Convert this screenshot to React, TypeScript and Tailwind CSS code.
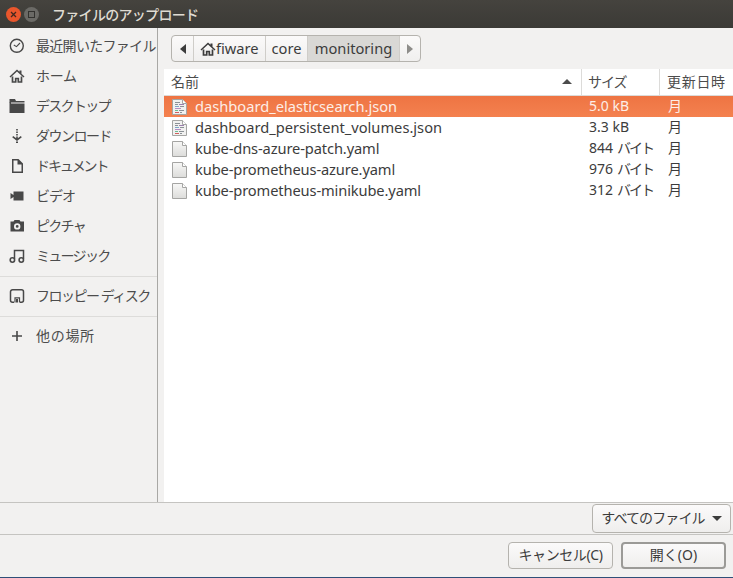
const sans = 'font-["Noto_Sans","Noto_Sans_CJK_JP",sans-serif]'

function FileIcon({ json }: { json?: boolean }) {
  return (
    <svg width="16" height="16" viewBox="0 0 16 16" className="shrink-0">
      <defs>
        <linearGradient id="paper" x1="0" y1="0" x2="0" y2="1">
          <stop offset="0" stopColor="#f8f8f7" />
          <stop offset="1" stopColor="#dcdcda" />
        </linearGradient>
      </defs>
      <path d="M.5.5h10l4 4v11H.5z" fill={json ? '#f1f1f0' : 'url(#paper)'} stroke="#a5a5a3" />
      <path d="M10.500.5v4h4" fill="#fff" stroke="#a5a5a3" />
      {json && (
        <g strokeWidth="1">
          <path d="M3 3.500h5" stroke="#8b9196" />
          <path d="M3 5.500h3" stroke="#8b9196" />
          <path d="M7 5.500h5" stroke="#9b7fae" />
          <path d="M3 7.500h4" stroke="#7ba7c9" />
          <path d="M8 7.500h4" stroke="#8b9196" />
          <path d="M3 9.500h6" stroke="#b58ac0" />
          <path d="M3 11.500h3" stroke="#6dbb94" />
          <path d="M7 11.500h5" stroke="#8b9196" />
          <path d="M3 13.500h4" stroke="#d0605c" />
          <path d="M8 13.500h2" stroke="#8b9196" />
        </g>
      )}
    </svg>
  )
}

function HomeGlyph({ color }: { color: string }) {
  return (
    <g>
      <path d="M8 1.500.5 8.500l1 1L8 3.500l6.500 6 1-1-3-2.800V2.500h-2v1.300z" fill={color} />
      <path d="M3.500 8.500v5.500h3.200v-3.500h2.600V14h3.200V8.500" fill="none" stroke={color} strokeWidth="1.700" />
    </g>
  )
}

function SideIcon({ name }: { name: string }) {
  const c = '#484848'
  return (
    <svg width="16" height="16" viewBox="0 0 16 16" className="shrink-0">
      {name === 'recent' && (
        <g fill="none" stroke={c}>
          <circle cx="7.800" cy="7.800" r="6.500" strokeWidth="1.400" />
          <path d="M4.800 7l2.700 1.600L11 5" strokeWidth="1.100" />
        </g>
      )}
      {name === 'home' && <HomeGlyph color={c} />}
      {name === 'desktop' && (
        <g fill={c}>
          <path d="M.5 1h5.500l1 2H15.500v1.500H.5z" />
          <path d="M.5 4H2v1.500h13.500V15H.5z" />
        </g>
      )}
      {name === 'download' && (
        <g fill={c}>
          <rect x="7.200" y="1" width="1.600" height="1.500" />
          <rect x="7.200" y="3.500" width="1.600" height="1.500" />
          <rect x="7.200" y="6" width="1.600" height="1.500" />
          <path d="M7.200 8.500h1.600v1.800l3-2.300 1 1.200L8 13 3.200 9.200l1-1.200 3 2.300z" />
          <rect x="7" y="13.500" width="2" height="1.500" />
        </g>
      )}
      {name === 'doc' && (
        <path d="M3 1h6.500L14 5.500V15H3zM4.500 2.500v11h8V6.500H8.500v-4z" fill={c} fillRule="evenodd" />
      )}
      {name === 'video' && <path d="M1.500 5 4.500 7V3.500h10V12.500h-10V9l-3 2z" fill={c} />}
      {name === 'photo' && (
        <path d="M5.500 2h5l1 1.500h3.500v10H1.500V3.500H4.500zM8.200 5.200a3.200 3.200 0 1 0 0 6.400 3.200 3.200 0 0 0 0-6.400zm0 1.800a1.400 1.400 0 1 1 0 2.800 1.400 1.400 0 0 1 0-2.800z" fill={c} fillRule="evenodd" />
      )}
      {name === 'music' && (
        <g>
          <path d="M5.500 11V2.500h9V11" fill="none" stroke={c} strokeWidth="1.500" />
          <circle cx="3.400" cy="12" r="2.200" fill="none" stroke={c} strokeWidth="1.600" />
          <circle cx="12.300" cy="12" r="2.200" fill="none" stroke={c} strokeWidth="1.600" />
        </g>
      )}
      {name === 'floppy' && (
        <g fill="none" stroke={c}>
          <path d="M5 14.200H3.500a2 2 0 0 1-2-2V3.800a2 2 0 0 1 2-2h9a2 2 0 0 1 2 2v8.400a2 2 0 0 1-2 2H11" strokeWidth="1.500" />
          <path d="M6 14.500V9.800h4.500v4.700" strokeWidth="1.200" />
          <rect x="7" y="11" width="2" height="3.500" fill={c} stroke="none" />
        </g>
      )}
      {name === 'plus' && <path d="M7.200 3h1.600v4.200H13v1.600H8.800V13H7.200V8.800H3V7.200h4.200z" fill={c} />}
    </svg>
  )
}

function Place({ icon, label, className }: { icon: string; label: string; className: string }) {
  return (
    <div className="flex h-[30px] items-center pl-[9px]">
      <SideIcon name={icon} />
      <span className={`ml-[11px] -translate-y-px whitespace-nowrap text-[14px] text-[#4c4c4c] ${className}`}>{label}</span>
    </div>
  )
}

const files = [
  { name: 'dashboard_elasticsearch.json', size: '5.0 kB', json: true },
  { name: 'dashboard_persistent_volumes.json', size: '3.3 kB', json: true },
  { name: 'kube-dns-azure-patch.yaml', size: '844', unit: 'バイト' },
  { name: 'kube-prometheus-azure.yaml', size: '976', unit: 'バイト' },
  { name: 'kube-prometheus-minikube.yaml', size: '312', unit: 'バイト' },
]

export default function App() {
  return (
    <div className={`flex h-[578px] w-[733px] flex-col overflow-hidden bg-[#f2f1f0] ${sans}`}>
      {/* Title bar */}
      <div className="flex h-[28px] shrink-0 items-center bg-gradient-to-b from-[#45433e] to-[#3b3a36] pl-[6px]">
        <div className="flex h-[15px] w-[15px] items-center justify-center rounded-full bg-[#e9562c]">
          <svg width="7" height="7" viewBox="0 0 7 7">
            <path d="M1 1l5 5M6 1 1 6" stroke="#41281f" strokeWidth="1.300" />
          </svg>
        </div>
        <div className="ml-[3px] flex h-[15px] w-[15px] items-center justify-center rounded-full bg-[#6b6a66]">
          <div className="h-[7px] w-[7px] border border-[#33322f]" />
        </div>
        <span className="ml-[13px] text-[14px] font-medium tracking-[-0.7px] text-[#dfdbd2]">ファイルのアップロード</span>
      </div>

      <div className="flex min-h-0 flex-1">
        {/* Places sidebar */}
        <div className="w-[158px] shrink-0 overflow-hidden border-r border-[#a9a8a5] pt-[3px]">
          <Place icon="recent" label="最近開いたファイル" className="tracking-[-0.7px]" />
          <Place icon="home" label="ホーム" className="tracking-[-0.3px]" />
          <Place icon="desktop" label="デスクトップ" className="tracking-[-1.7px]" />
          <Place icon="download" label="ダウンロード" className="tracking-[-1.500px]" />
          <Place icon="doc" label="ドキュメント" className="tracking-[-2.100px]" />
          <Place icon="video" label="ビデオ" className="tracking-[-1px]" />
          <Place icon="photo" label="ピクチャ" className="tracking-[-1.700px]" />
          <Place icon="music" label="ミュージック" className="tracking-[-1.700px]" />
          <div className="mt-[5px] h-px bg-[#dddcda]" />
          <div className="mt-[4px]">
            <Place icon="floppy" label="フロッピー ディスク" className="tracking-[-1.500px]" />
          </div>
          <div className="mt-[5px] h-px bg-[#dddcda]" />
          <div className="mt-[4px]">
            <Place icon="plus" label="他の場所" className="tracking-[0.7px]" />
          </div>
        </div>

        {/* Browser */}
        <div className="flex min-w-0 flex-1 flex-col pl-[6px]">
          <div className="flex h-[41px] shrink-0 items-start pl-[7px] pt-[7px]">
            <div className="flex h-[27px] items-stretch overflow-hidden rounded-[4px] border border-[#b5b3ae] bg-gradient-to-b from-[#fbfafa] to-[#f0efee] text-[14.67px] text-[#3c3c3c]">
              <div className="flex w-[22px] items-center justify-center border-r border-[#cfcdc9]">
                <div className="h-0 w-0 border-y-[5px] border-r-[6px] border-y-transparent border-r-[#3c3c3c]" />
              </div>
              <div className="flex w-[72px] items-center border-r border-[#cfcdc9] pl-[6px]">
                <svg width="16" height="16" viewBox="0 0 16 16" className="shrink-0">
                  <HomeGlyph color="#3c3c3c" />
                </svg>
                <span className="-translate-y-px">fiware</span>
              </div>
              <div className="flex w-[42px] items-center justify-center border-r border-[#cfcdc9]">
                <span className="-translate-y-px">core</span>
              </div>
              <div className="flex w-[91px] items-center justify-center bg-[#d9d8d5]">
                <span className="-translate-y-px">monitoring</span>
              </div>
              <div className="flex w-[21px] items-center justify-center border-l border-[#cfcdc9]">
                <div className="h-0 w-0 border-y-[5px] border-l-[6px] border-y-transparent border-l-[#8e8d8a]" />
              </div>
            </div>
          </div>

          <div className="min-h-0 flex-1 bg-white">
            {/* Column headers */}
            <div className="flex h-[27px] border-b border-[#dcdbd9] text-[14px] text-[#4c4c4c]">
              <div className="relative flex w-[418px] items-center border-r border-[#dcdbd9] pl-[7px]">
                <span className="-translate-y-px">名前</span>
                <div className="absolute right-[9px] top-[10px] h-0 w-0 border-x-[5px] border-b-[5px] border-x-transparent border-b-[#4c4c4c]" />
              </div>
              <div className="flex w-[78px] items-center border-r border-[#dcdbd9] pl-[6px]">
                <span className="-translate-y-px tracking-[-1px]">サイズ</span>
              </div>
              <div className="flex flex-1 items-center whitespace-nowrap pl-[7px]">
                <span className="-translate-y-px tracking-[0.7px]">更新日時</span>
              </div>
            </div>

            {/* Rows */}
            {files.map((f, i) => (
              <div
                key={f.name}
                className={`flex h-[21px] items-center ${
                  i === 0 ? 'bg-gradient-to-b from-[#ee7443] to-[#f4814f] text-[#fdeee7]' : 'text-[#3c3c3c]'
                }`}
              >
                <div className="flex w-[418px] items-center pl-[8px]">
                  <FileIcon json={f.json} />
                  <span className={`ml-[7px] -translate-y-px whitespace-nowrap text-[14.67px] ${f.json ? '' : 'tracking-[-0.12px]'}`}>
                    {f.name}
                  </span>
                </div>
                <div className="w-[78px] -translate-y-px whitespace-nowrap pl-[7px] text-[14px]">
                  {f.size}
                  {f.unit && <span className="ml-[4px] tracking-[-2px]">{f.unit}</span>}
                </div>
                <div className="-translate-y-px pl-[8px] text-[14px]">月</div>
              </div>
            ))}
          </div>
        </div>
      </div>

      {/* Filter row */}
      <div className="flex h-[33px] shrink-0 items-center justify-end border-y border-[#c5c4c1] pr-[2px]">
        <div className="flex h-[29px] w-[139px] items-center justify-center rounded-[4px] border border-[#b5b3ae] bg-gradient-to-b from-[#fbfafa] to-[#efeeed] text-[14px] text-[#3c3c3c]">
          <span className="-translate-y-px tracking-[-0.9px]">すべてのファイル</span>
          <div className="ml-[7px] h-0 w-0 border-x-[5px] border-t-[5px] border-x-transparent border-t-[#3c3c3c]" />
        </div>
      </div>

      {/* Actions */}
      <div className="flex h-[42px] shrink-0 items-center justify-end gap-[8px] pb-[1px] pr-[7px] text-[14px] text-[#3c3c3c]">
        <div className="flex h-[27px] w-[105px] items-center justify-center rounded-[4px] border border-[#b5b3ae] bg-gradient-to-b from-[#fbfafa] to-[#efeeed]">
          <span className="-translate-y-px tracking-[-0.4px]">キャンセル(C)</span>
        </div>
        <div className="flex h-[27px] w-[105px] items-center justify-center rounded-[4px] border-2 border-[#9b9a97] bg-gradient-to-b from-[#fbfafa] to-[#efeeed]">
          <span className="-translate-y-px">開く(O)</span>
        </div>
      </div>
      <div className="h-px shrink-0 bg-[#2f4f78]" />
    </div>
  )
}
